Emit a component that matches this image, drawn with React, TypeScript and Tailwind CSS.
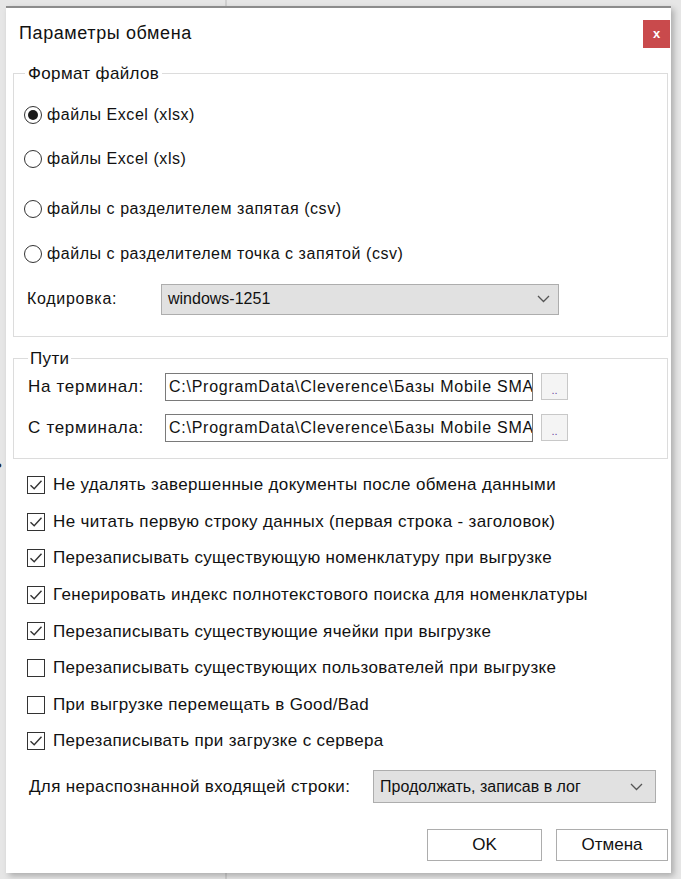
import React from "react";

const font = { fontFamily: '"Liberation Sans", Arial, sans-serif' };

function Radio({ checked, label }: { checked?: boolean; label: string }) {
  return (
    <div className="flex h-[24px] items-center">
      <span className="flex h-[18px] w-[18px] items-center justify-center rounded-full border border-[#333] bg-white">
        {checked && <span className="h-[10px] w-[10px] rounded-full bg-[#1a1a1a]" />}
      </span>
      <span className="ml-[5px] text-[16px] tracking-[0.55px] text-[#111]">{label}</span>
    </div>
  );
}

function Check({ checked, label }: { checked?: boolean; label: string }) {
  return (
    <div className="flex h-[24px] items-center">
      <span className="flex h-[18px] w-[18px] items-center justify-center border border-[#333] bg-white">
        {checked && (
          <svg width="14" height="14" viewBox="0 0 14 14">
            <path d="M1.5 7.2 L5.2 10.8 L12.5 2.8" fill="none" stroke="#333" strokeWidth="1.4" />
          </svg>
        )}
      </span>
      <span className="ml-[8px] text-[17px] tracking-[0.35px] text-[#111]">{label}</span>
    </div>
  );
}

function Chevron() {
  return (
    <svg width="13" height="8" viewBox="0 0 13 8">
      <path d="M1 1 L6.5 6.5 L12 1" fill="none" stroke="#555" strokeWidth="1.3" />
    </svg>
  );
}

function PathRow({ label, className }: { label: string; className?: string }) {
  return (
    <div className={`flex items-center ${className ?? ""}`}>
      <span className="w-[137px] text-[17px] tracking-[0.7px] text-[#111]">{label}</span>
      <div className="flex h-[28px] w-[368px] items-center overflow-hidden whitespace-nowrap border border-[#7a7a7a] pl-[3px] text-[16px] tracking-[0.75px] text-[#111]">
        C:\ProgramData\Cleverence\Базы Mobile SMA
      </div>
      <div className="ml-[8px] flex h-[27px] w-[27px] items-end justify-center border border-[#c8c8c8] bg-[#f4f4f4] pb-[3px] text-[11px] leading-none text-[#6a4aa0]">
        ..
      </div>
    </div>
  );
}

export default function App() {
  return (
    <div className="relative h-[879px] w-[681px] overflow-hidden bg-[#e6e6e6]" style={font}>
      {/* background window behind the dialog */}
      <div className="absolute left-[225px] top-0 h-full w-[2px] bg-[#d0d0d0]" />
      <span className="absolute left-[-7px] top-[450px] text-[17px] text-[#222]">ь</span>

      <div className="relative ml-[6px] mt-[6px] flex h-[867px] w-[665px] flex-col border-t-2 border-[#8c8c8c] bg-white shadow-[3px_3px_6px_rgba(0,0,0,0.25)]">
        {/* title bar */}
        <div className="flex h-[50px] items-start justify-between">
          <div className="mt-[12px] pl-[13px] text-[18px] tracking-[0.6px] text-[#111]">Параметры обмена</div>
          <div className="mt-[12px] mr-[1px] flex h-[28px] w-[27px] items-center justify-center bg-[#c94a4c] text-[13px] font-bold text-white">
            x
          </div>
        </div>

        {/* Формат файлов */}
        <fieldset className="ml-[7px] mr-[3px] mt-[3px] h-[276px] border border-[#dcdcdc] px-[10px] pt-[16px]">
          <legend className="ml-[1px] px-[3px] text-[17px] tracking-[0.35px] text-[#111]">Формат файлов</legend>
          <div className="flex flex-col">
            <Radio checked label="файлы Excel (xlsx)" />
            <div className="h-[20px]" />
            <Radio label="файлы Excel (xls)" />
            <div className="h-[26px]" />
            <Radio label="файлы с разделителем запятая (csv)" />
            <div className="h-[21px]" />
            <Radio label="файлы с разделителем точка с запятой (csv)" />
          </div>
          <div className="mt-[18px] flex items-center">
            <span className="ml-[3px] w-[134px] text-[16px] tracking-[0.7px] text-[#111]">Кодировка:</span>
            <div className="flex h-[31px] w-[398px] items-center justify-between border border-[#adadad] bg-[#e1e1e1] pl-[6px] pr-[8px] text-[16px] text-[#111]">
              <span>windows-1251</span>
              <Chevron />
            </div>
          </div>
        </fieldset>

        {/* Пути */}
        <fieldset className="ml-[7px] mr-[3px] mt-[9px] h-[113px] border border-[#dcdcdc] pl-[14px] pt-0">
          <legend className="ml-[0px] px-[2px] text-[17px] tracking-[0.35px] text-[#111]">Пути</legend>
          <PathRow label="На терминал:" className="mt-[1px]" />
          <PathRow label="С терминала:" className="mt-[13px]" />
        </fieldset>

        {/* checkboxes */}
        <div className="mt-[14px] flex flex-col gap-[12.6px] pl-[21px]">
          <Check checked label="Не удалять завершенные документы после обмена данными" />
          <Check checked label="Не читать первую строку данных (первая строка - заголовок)" />
          <Check checked label="Перезаписывать существующую номенклатуру при выгрузке" />
          <Check checked label="Генерировать индекс полнотекстового поиска для номенклатуры" />
          <Check checked label="Перезаписывать существующие ячейки при выгрузке" />
          <Check label="Перезаписывать существующих пользователей при выгрузке" />
          <Check label="При выгрузке перемещать в Good/Bad" />
          <Check checked label="Перезаписывать при загрузке с сервера" />
        </div>

        <div className="mt-[17px] flex items-center pl-[23px]">
          <span className="w-[344px] text-[17px] tracking-[0.35px] text-[#111]">Для нераспознанной входящей строки:</span>
          <div className="flex h-[33px] w-[283px] items-center justify-between border border-[#adadad] bg-[#e1e1e1] pl-[6px] pr-[12px] text-[16px] text-[#111]">
            <span>Продолжать, записав в лог</span>
            <Chevron />
          </div>
        </div>

        <div className="mt-[26px] flex justify-end gap-[14px] pr-[3px]">
          <div className="flex h-[32px] w-[115px] items-center justify-center border border-[#adadad] bg-white text-[17px] text-[#111]">
            OK
          </div>
          <div className="flex h-[32px] w-[112px] items-center justify-center border border-[#adadad] bg-white text-[17px] text-[#111]">
            Отмена
          </div>
        </div>
      </div>
    </div>
  );
}
